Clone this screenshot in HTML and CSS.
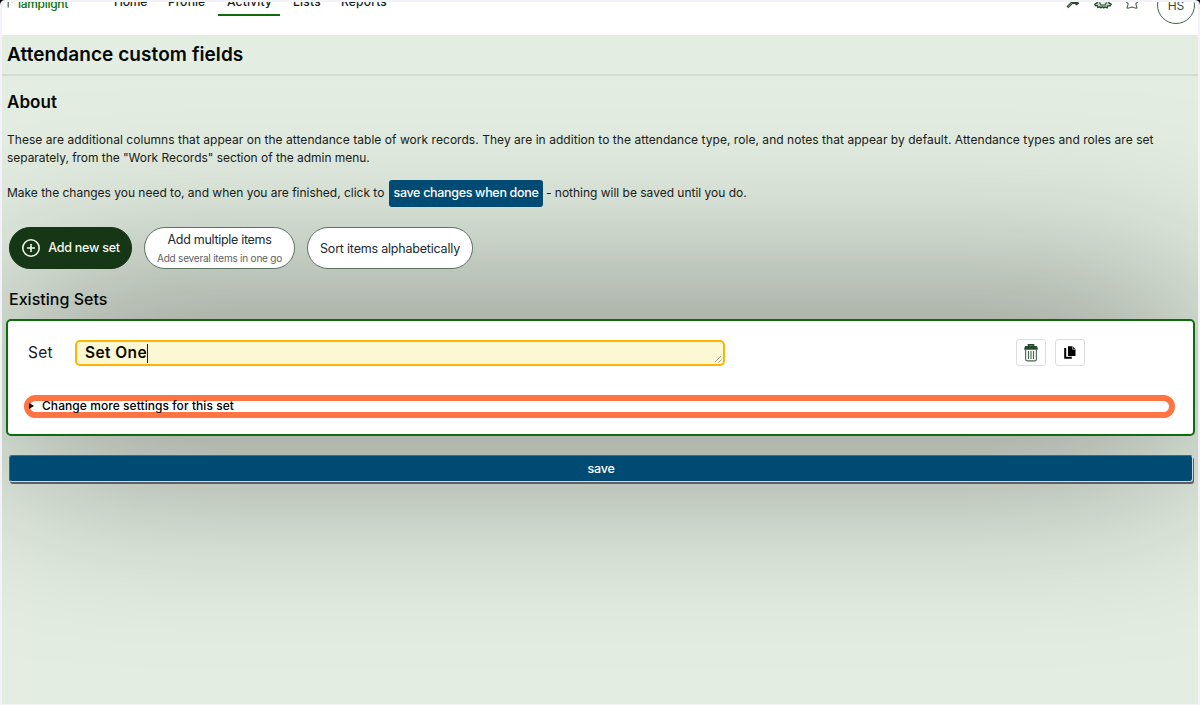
FILE: index.html
```html
<!DOCTYPE html>
<html lang="en">
<head>
<meta charset="utf-8">
<title>Attendance custom fields</title>
<link rel="stylesheet" href="styles.css">
</head>
<body>
<div class="frame">
<div class="app">
  <header class="topbar">
    <a class="brand"><svg width="9" height="9" viewBox="0 0 9 9"><path d="M1.2 0v5.5" stroke="#1d5b42" stroke-width="1.1"/><path d="M4 .8h2" stroke="#f2d58b" stroke-width="1"/></svg><span>lamplight</span></a>
    <nav class="nav">
      <a class="nav-home">Home</a><a class="nav-profile">Profile</a><a class="nav-activity active">Activity</a><a class="nav-lists">Lists</a><a class="nav-reports">Reports</a>
    </nav>
    <div class="tools">
      <svg width="16" height="16" viewBox="0 0 16 16"><path d="m2.4 13.4 5-5M6.8 8.8h3.4l1.4 1.1 1.9-1.4" fill="none" stroke="#2d4a2f" stroke-width="2.6"/><path d="m2.6 13.2 4.2-4.1" stroke="#a9b8aa" stroke-width=".8"/></svg>
      <svg width="20" height="16" viewBox="0 0 20 16"><path d="m1.8 10.3 2.4-1.5V7h11.6v1.8l2.4 1.5-1 1.5-2.5.1-.6 1.9-2.2-.9-1.1 1-1-.9H9l-1 .9-1-1-2.2.5-.5-1.8-1.8-.1z" fill="#c6d2c7" stroke="#1f4423" stroke-width="1.3"/><path d="M6.5 8.5 8 11h4l1.5-2.5" fill="#fff" stroke="#1f4423" stroke-width="1.1"/></svg>
      <svg width="16" height="16" viewBox="0 0 16 16"><path d="m8 1.6 2 4.3 5 .6-3.2 3.3 1.2 4.2-1 .3-4-1.3-4 1.3-1-.3 1.2-4.2L1 6.5l5-.6z" fill="none" stroke="#4e6650" stroke-width="1.1" stroke-linejoin="round"/></svg>
      <span class="avatar">HS</span>
    </div>
  </header>
  <h1 class="title">Attendance custom fields</h1>
  <main class="content">
    <h2 class="about">About</h2>
    <p class="para"><span class="line-one">These are additional columns that appear on the attendance table of work records. They are in addition to the attendance type, role, and notes that appear by default. Attendance types and roles are set</span><br><span class="line-two">separately, from the "Work Records" section of the admin menu.</span></p>
    <div class="hint"><span class="hint-lead">Make the changes you need to, and when you are finished, click to</span><button class="inline-save">save changes when done</button><span>- nothing will be saved until you do.</span></div>
    <div class="actions">
      <button class="pill primary"><svg width="20" height="20" viewBox="0 0 20 20"><circle cx="10" cy="10" r="8.2" fill="none" stroke="#f2f5ea" stroke-width="1.6"/><path d="M10 6v8M6 10h8" stroke="#f2f5ea" stroke-width="1.6"/></svg><span>Add new set</span></button>
      <button class="pill multi"><span class="multi-main">Add multiple items</span><span class="multi-sub">Add several items in one go</span></button>
      <button class="pill sort">Sort items alphabetically</button>
    </div>
    <h3 class="existing">Existing Sets</h3>
    <section class="card">
      <div class="row">
        <label class="label">Set</label>
        <div class="field"><span class="value">Set One</span><span class="caret"></span><svg class="grip" width="8" height="8" viewBox="0 0 8 8"><path d="M1 7 7 1M4.5 7.5l3-3" stroke="#a5a392" stroke-width="1"/></svg></div>
        <div class="tiles">
          <button class="tile"><svg width="16" height="18" viewBox="0 0 16 18"><path d="M5.5 2V.9h5V2" fill="none" stroke="#23482a" stroke-width="1.6"/><path d="M2 2h12l1 3.8H1z" fill="#284b2d"/><path d="M2.6 6v9.2q0 1.7 1.7 1.7h7.4q1.7 0 1.7-1.7V6" fill="#f6f8f5" stroke="#4d6a50" stroke-width="1.1"/><path d="M5.5 7v8M8 7v8M10.5 7v8" stroke="#4d6a50" stroke-width="1.1"/></svg></button>
          <button class="tile"><svg width="12" height="13" viewBox="0 0 12 13"><path d="M4 .3h4.6l2.9 3V10H4z" fill="#000"/><path d="M8.6.3v3h2.9" fill="none" stroke="#fff" stroke-width=".6"/><path d="M1.2 2v9.8h6.6" fill="none" stroke="#000" stroke-width="2"/></svg></button>
        </div>
      </div>
      <div class="more"><span class="arrow"></span><span class="more-text">Change more settings for this set</span></div>
    </section>
    <button class="save">save</button>
  </main>
</div>
</div>
</body>
</html>
```
FILE: styles.css
```css
* { box-sizing: border-box; }
html { background: #000; }
body { margin: 0; height: 705px; overflow: hidden; font-family: Inter, "Liberation Sans", sans-serif; font-size: 12px; color: #182018; }
button { font: inherit; border: 0; margin: 0; padding: 0; color: inherit; white-space: nowrap; }
h1, h2, h3, p { margin: 0; color: #050805; }
svg { display: block; flex: none; }
.frame { height: 705px; padding: 2px 2px 1px; background: #f3f2f8; border-radius: 5px 5px 0 0; }
.app { height: 702px; background: #e3ede1; border-radius: 6px 6px 0 0; overflow: hidden; isolation: isolate; }
.topbar { height: 33px; background: #fff; display: flex; align-items: flex-start; white-space: nowrap; overflow: hidden; }
.brand { display: flex; width: 103px; padding-left: 5px; color: #0c700c; gap: 2px; letter-spacing: -.3px; line-height: 15px; }
.brand span { margin-top: -6px; font-weight: 500; }
.nav { display: flex; color: #12241a; font-weight: 500; line-height: 15px; }
.nav a { flex: none; height: 22px; margin-top: -8px; padding: 0 9px; }
.nav .active { border-bottom: 2px solid #0e6b0e; padding: 0 8px 0 9px; }
.nav-home { width: 54px; letter-spacing: -.2px; }
.nav-profile { width: 59px; }
.nav-activity { width: 62px; letter-spacing: .17px; }
.nav .nav-lists { width: 52px; padding-left: 13px; letter-spacing: .25px; }
.nav-reports { letter-spacing: .2px; }
.tools { margin: -8px 3px 0 auto; display: flex; gap: 15px; }
.tools svg + svg { margin-left: -3px; }
.tools svg:nth-child(3) { margin-left: -4px; }
.avatar { width: 38px; height: 38px; margin: -8px 0 0 2px; border: 1px solid #42614a; border-radius: 50%; display: flex; align-items: center; justify-content: center; color: #3a4c45; }
.title { height: 41px; padding: 1px 0 0 5px; border-bottom: 2px solid #d6dcd4; font-size: 19px; font-weight: 600; line-height: 38px; letter-spacing: .08px; }
.content { padding: 0 3px 0 6px; }
.about, .para, .hint { margin-left: -1px; }
.about { padding-top: 15px; font-size: 17px; font-weight: 600; line-height: 22px; letter-spacing: .05px; }
.para { padding-top: 18px; line-height: 18px; white-space: nowrap; color: #182018; }
.line-one { letter-spacing: .041px; }
.line-two { letter-spacing: -.04px; }
.hint { display: flex; align-items: center; height: 28px; margin-top: 12px; white-space: nowrap; letter-spacing: -.015px; }
.hint > span { margin-top: -2px; }
.hint-lead { width: 382px; }
.inline-save { width: 154px; height: 27px; padding-bottom: 1px; margin-right: 3px; border-radius: 3px; background: #004b73; color: #fff; font-size: 12.5px; font-weight: 500; letter-spacing: -.317px; }
.actions { display: flex; gap: 12px; padding: 20px 0 0 1px; }
.pill { height: 42px; border-radius: 21px; background: #fff; border: 1px solid #5c7460; display: flex; align-items: center; justify-content: center; font-size: 12.5px; letter-spacing: -.2px; color: #202a33; }
.primary { width: 123px; background: #163716; border-color: #163716; color: #f7faef; gap: 7px; font-weight: 500; letter-spacing: -.25px; }
.primary span { margin-top: -2px; }
.multi { width: 151px; flex-direction: column; letter-spacing: -.3px; }
.multi-main { line-height: 20px; }
.multi-sub { font-size: 10px; line-height: 18px; margin-top: -1px; letter-spacing: -.216px; color: #5c6266; }
.sort { width: 166px; }
.existing { padding: 20px 0 0 1px; font-size: 16px; font-weight: 500; line-height: 20px; letter-spacing: .026px; }
.card { position: relative; width: 1189px; height: 117px; margin: 10px 0 0 -2px; padding: 18px 18px 0 20px; background: #fff; border: 2px solid #0e6b0e; border-radius: 5px; }
/* Wide soft shadow cast behind the card */
.card::before { content: ""; position: absolute; z-index: -1; inset: -2px; background: rgba(0, 0, 0, .6); filter: blur(100px); }
.row { display: flex; align-items: flex-start; height: 56px; }
.label { width: 47px; font-size: 15.5px; line-height: 28px; letter-spacing: .3px; }
.field { position: relative; width: 650px; height: 26px; margin-top: 1px; padding-left: 8px; display: flex; align-items: center; border: 2px solid #ffb400; border-radius: 5px; background: #fcf8d3; color: #0a0a00; font-size: 15.5px; font-weight: 600; letter-spacing: .4px; }
.value { margin-top: -2px; }
.caret { width: 1px; height: 19px; background: #222; }
.grip { position: absolute; right: 1px; bottom: 1px; }
.tiles { display: flex; gap: 9px; margin-left: 291px; }
.tile { width: 30px; height: 27px; border: 1px solid #dedede; border-radius: 3px; background: #fff; display: flex; align-items: center; justify-content: center; }
.more { width: 1151px; height: 23px; margin-left: -4px; border: 6px solid #ff7442; border-radius: 12px; display: flex; align-items: center; white-space: nowrap; }
.arrow { border: 3px solid transparent; border-left: 5px solid #000; border-right: 0; margin: -1px 8px 0 -1px; }
.more-text { font-weight: 500; line-height: 15px; letter-spacing: .063px; margin-top: -2px; color: #000; }
.save { display: block; width: 1184px; height: 27px; margin: 19px 0 0 1px; border: 1px solid #3d6c87; border-bottom-color: #d2d8df; border-right-color: #d2d8df; border-radius: 3px; background: #004b73; box-shadow: 1px 2px 0 #635c66; color: #fff; font-size: 12.5px; font-weight: 500; letter-spacing: -.234px; }
```
